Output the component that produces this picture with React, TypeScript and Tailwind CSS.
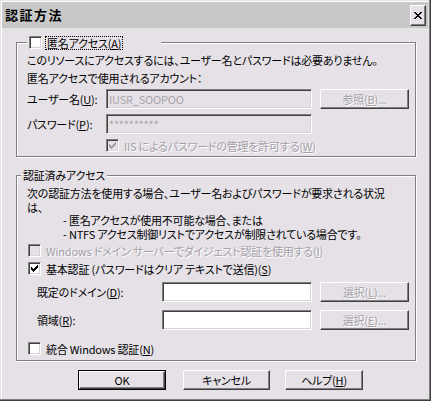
import React from 'react';

const FONT = "'Noto Sans CJK JP', 'Noto Sans', sans-serif";

const CHECK = [
  '......#',
  '.....##',
  '#...###',
  '##.###.',
  '#####..',
  '.###...',
  '..#....',
];

function CheckGlyph({ color }: { color: string }) {
  return (
    <svg width="7" height="7" viewBox="0 0 7 7" shapeRendering="crispEdges">
      {CHECK.flatMap((row, y) =>
        row.split('').map((c, x) =>
          c === '#' ? <rect key={`${x}-${y}`} x={x} y={y} width="1" height="1" fill={color} /> : null
        )
      )}
    </svg>
  );
}

function Checkbox({ checked = false, disabled = false }: { checked?: boolean; disabled?: boolean }) {
  return (
    <span
      className={`flex items-center justify-center w-[13px] h-[13px] shrink-0 border border-t-[#808080] border-l-[#808080] border-b-white border-r-white shadow-[inset_1px_1px_0_#404040,inset_-1px_-1px_0_#d6d2d8] ${
        disabled ? 'bg-[#e5e1e7]' : 'bg-white'
      }`}
    >
      {checked && <CheckGlyph color={disabled ? '#a19da3' : '#000000'} />}
    </span>
  );
}

function U({ children }: { children: React.ReactNode }) {
  return <span className="underline decoration-1 underline-offset-[1px]">{children}</span>;
}

const DIS = 'text-[#a4a0a6] [text-shadow:1px_1px_0_#ffffff]';

function Field({ w, disabled = false, value = '' }: { w: string; disabled?: boolean; value?: string }) {
  return (
    <div
      className={`${w} h-[20px] shrink-0 flex items-center pl-[2px] border border-t-[#808080] border-l-[#808080] border-b-white border-r-white shadow-[inset_1px_1px_0_#404040,inset_-1px_-1px_0_#d6d2d8] ${
        disabled ? 'bg-[#e5e1e7] text-[#a8a4aa]' : 'bg-white'
      }`}
    >
      {value}
    </div>
  );
}

function Btn({
  children,
  w,
  disabled = false,
  def = false,
}: {
  children: React.ReactNode;
  w: string;
  disabled?: boolean;
  def?: boolean;
}) {
  const inner = (
    <div
      className={`h-full w-full flex items-center justify-center border border-t-white border-l-white border-b-[#404040] border-r-[#404040] shadow-[inset_-1px_-1px_0_#808080] ${
        disabled ? DIS : 'text-black'
      }`}
    >
      {children}
    </div>
  );
  if (def) {
    return <div className={`${w} h-[20px] border border-black shrink-0`}>{inner}</div>;
  }
  return <div className={`${w} h-[20px] shrink-0`}>{inner}</div>;
}

export default function App() {
  return (
    <div
      className="w-[431px] h-[401px] overflow-hidden bg-[#e5e1e7] p-[2px] pr-[3px] pb-[3px] flex flex-col text-[11px] tracking-[-0.2px] leading-[14px] whitespace-nowrap text-black [font-feature-settings:'palt'] shadow-[inset_-1px_-1px_0_#404040,inset_-2px_-2px_0_#808080,inset_1px_1px_0_#e5e1e7,inset_2px_2px_0_#ffffff]"
      style={{ fontFamily: FONT }}
    >
      {/* Title bar */}
      <div className="h-[26px] bg-[#c8c8c8] flex items-center justify-between pl-[3px] pr-[2px] shrink-0">
        <span className="font-bold text-[13px] tracking-[1.5px]">認証方法</span>
        <div className="w-[16px] h-[21px] flex items-center justify-center border border-t-white border-l-white border-b-[#404040] border-r-[#404040] shadow-[inset_-1px_-1px_0_#808080] bg-[#e5e1e7]">
          <svg width="8" height="7" viewBox="0 0 8 7" shapeRendering="crispEdges">
            <path d="M0 0h2v1h-2z M6 0h2v1h-2z M1 1h2v1h-2z M5 1h2v1h-2z M2 2h4v1h-4z M3 3h2v1h-2z M2 4h4v1h-4z M1 5h2v1h-2z M5 5h2v1h-2z M0 6h2v1h-2z M6 6h2v1h-2z" fill="#000" />
          </svg>
        </div>
      </div>

      {/* Client */}
      <div className="flex flex-col pl-[14px]">
        {/* Group 1 */}
        <div className="mt-[14px] w-[400px] border border-[#808080] shadow-[1px_1px_0_#ffffff,inset_1px_1px_0_#ffffff] flex flex-col pb-[4px]">
          <div className="-mt-[7px] ml-[10px] w-[134px] h-[13px] bg-[#e5e1e7] pl-[2px] flex items-center gap-[3px]">
            <Checkbox />
            <span className="border border-dotted border-black px-[1px] leading-[12px]">
              匿名アクセス(<U>A</U>)
            </span>
          </div>
          <div className="mt-[4px] pl-[10px] h-[14px] flex items-center">
            このリソースにアクセスするには、ユーザー名とパスワードは必要ありません。
          </div>
          <div className="mt-[4px] pl-[10px] h-[14px] flex items-center">匿名アクセスで使用されるアカウント：</div>
          <div className="mt-[4px] pl-[10px] h-[20px] flex items-center">
            <span className="w-[79px]">
              ユーザー名(<U>U</U>):
            </span>
            <Field w="w-[206px]" disabled value="IUSR_SOOPOO" />
            <div className="ml-[8px]">
              <Btn w="w-[89px]" disabled>
                参照(<U>B</U>)...
              </Btn>
            </div>
          </div>
          <div className="mt-[5px] pl-[10px] h-[20px] flex items-center">
            <span className="w-[79px]">
              パスワード(<U>P</U>):
            </span>
            <Field w="w-[206px]" disabled value="**********" />
          </div>
          <div className="mt-[5px] pl-[89px] h-[13px] flex items-center gap-[5px]">
            <Checkbox checked disabled />
            <span className={DIS}>
              IIS によるパスワードの管理を許可する(<U>W</U>)
            </span>
          </div>
        </div>

        {/* Group 2 */}
        <div className="mt-[18px] w-[400px] border border-[#808080] shadow-[1px_1px_0_#ffffff,inset_1px_1px_0_#ffffff] flex flex-col pb-[5px]">
          <div className="-mt-[8px] ml-[4px] w-fit h-[14px] bg-[#e5e1e7] px-[2px] flex items-center">認証済みアクセス</div>
          <div className="mt-[5px] pl-[10px] flex flex-col leading-[13px]">
            <div className="h-[13.5px] flex items-center">次の認証方法を使用する場合、ユーザー名およびパスワードが要求される状況</div>
            <div className="h-[13.5px] flex items-center">は、</div>
            <div className="h-[13.5px] flex items-center pl-[36px]">- 匿名アクセスが使用不可能な場合、または</div>
            <div className="h-[13.5px] flex items-center pl-[36px]">- NTFS アクセス制御リストでアクセスが制限されている場合です。</div>
          </div>
          <div className="mt-[3px] pl-[11px] h-[13px] flex items-center gap-[5px]">
            <Checkbox disabled />
            <span className={DIS}>
              Windows ドメイン サーバーでダイジェスト認証を使用する(<U>I</U>)
            </span>
          </div>
          <div className="mt-[5px] pl-[11px] h-[13px] flex items-center gap-[5px]">
            <Checkbox checked />
            <span>
              基本認証 (パスワードはクリア テキストで送信)(<U>S</U>)
            </span>
          </div>
          <div className="mt-[7px] pl-[20px] h-[20px] flex items-center">
            <span className="w-[125px]">
              既定のドメイン(<U>D</U>):
            </span>
            <Field w="w-[150px]" />
            <div className="ml-[8px]">
              <Btn w="w-[89px]" disabled>
                選択(<U>L</U>)...
              </Btn>
            </div>
          </div>
          <div className="mt-[8px] pl-[20px] h-[20px] flex items-center">
            <span className="w-[125px]">
              領域(<U>R</U>):
            </span>
            <Field w="w-[150px]" />
            <div className="ml-[8px]">
              <Btn w="w-[89px]" disabled>
                選択(<U>E</U>)...
              </Btn>
            </div>
          </div>
          <div className="mt-[12px] pl-[11px] h-[13px] flex items-center gap-[5px]">
            <Checkbox />
            <span>
              統合 Windows 認証(<U>N</U>)
            </span>
          </div>
        </div>

        {/* Buttons */}
        <div className="mt-[9px] pl-[62px] flex items-center">
          <Btn w="w-[88px]" def>
            OK
          </Btn>
          <div className="ml-[17px]">
            <Btn w="w-[87px]">キャンセル</Btn>
          </div>
          <div className="ml-[15px]">
            <Btn w="w-[78px]">
              ヘルプ(<U>H</U>)
            </Btn>
          </div>
        </div>
      </div>
    </div>
  );
}
